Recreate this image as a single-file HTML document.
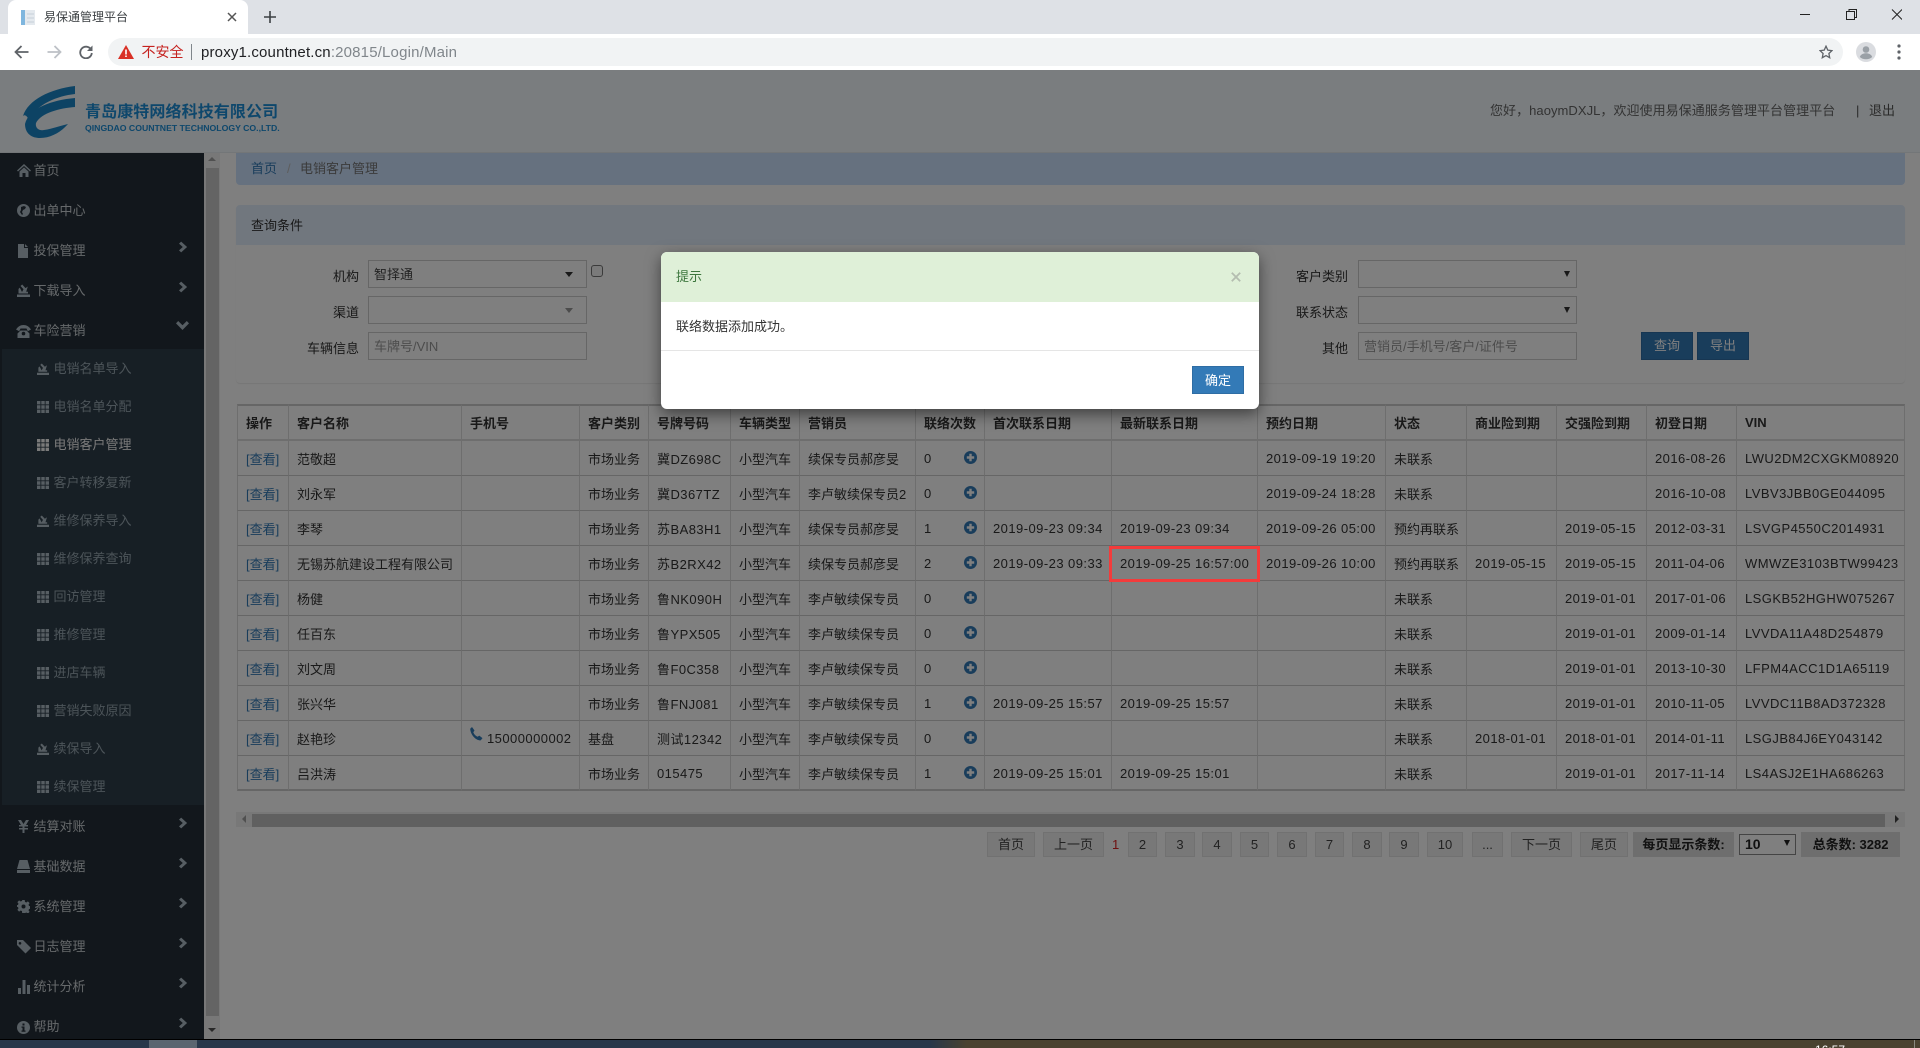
<!DOCTYPE html>
<html lang="zh-CN">
<head>
<meta charset="utf-8">
<title>易保通管理平台</title>
<style>
*{box-sizing:border-box}
html,body{margin:0;padding:0;width:1920px;height:1048px;overflow:hidden;background:#fff;font-family:"Liberation Sans","Noto Sans CJK SC",sans-serif;font-size:13px;color:#333}
.a{position:absolute}
svg{display:block}
/* browser chrome */
#tabs{left:0;top:0;width:1920px;height:34px;background:#dee1e6}
#tab{left:8px;top:0;width:240px;height:35px;background:#fff;border-radius:8px 8px 0 0}
#bar{left:0;top:34px;width:1920px;height:36px;background:#fff}
#omni{left:108px;top:38px;width:1735px;height:28px;border-radius:14px;background:#f1f3f4}
/* page */
#page{left:0;top:70px;width:1920px;height:970px;background:#fff}
#hd{left:0;top:70px;width:1920px;height:83px;background:#f4fafe;border-bottom:1px solid #e6ecf0}
#side{left:0;top:153px;width:204px;height:886px;background:#242f38}
#sub{left:2px;top:349px;width:202px;height:456px;background:#2f3e4a}
.m,.s{position:absolute;white-space:nowrap;line-height:20px;height:20px;font-size:13px;margin-top:1px}
.m{left:33.500px;color:#ccd2d6}
.s{left:53.500px;color:#98a8b2}
.ic{position:absolute;fill:#aebdc7;margin-top:1px}
.sb{position:absolute;left:204px;top:153px;width:16px;height:886px;background:#f1f1f1}
#crumb{left:236px;top:153px;width:1669px;height:32px;background:#ccE2fe;border-radius:0 0 4px 4px}
#qp{left:236px;top:205px;width:1669px;height:178px;background:#fff;border-radius:4px;box-shadow:0 1px 1px rgba(0,0,0,.08)}
#qh{left:0;top:0;width:1669px;height:40px;background:#e3eefc;border-radius:4px 4px 0 0;line-height:42px;padding-left:15px;color:#333}
.lb{position:absolute;text-align:right;width:90px;line-height:20px;height:20px;color:#333;margin-top:1px}
.ip{position:absolute;height:28px;border:1px solid #ccc;background:#fff;line-height:28px;padding-left:5px;color:#444}
.ph{color:#999}
.tri{position:absolute;width:0;height:0;border-left:4px solid transparent;border-right:4px solid transparent;border-top:5px solid #333}
.btn{position:absolute;top:332px;width:52px;height:28px;background:#337ab7;border:1px solid #2e6da4;color:#fff;text-align:center;line-height:26px}
table{position:absolute;left:237px;top:404px;width:1668px;border-collapse:separate;border-spacing:0;table-layout:fixed;color:#333}
th{height:37px;padding:0 0 0 8px;text-align:left;font-weight:700;border-top:2px solid #ccc;border-bottom:2px solid #ddd;border-right:1px solid #ddd;white-space:nowrap;overflow:hidden}
td{height:35px;padding:1px 0 0 8px;border-bottom:1px solid #ccc;border-right:1px solid #ddd;white-space:nowrap;overflow:hidden;position:relative}
th:first-child,td:first-child{border-left:1px solid #ddd}
tr:last-child td{border-bottom:2px solid #ccc}
td.n{letter-spacing:.45px}
td a{color:#337ab7}
.pl{position:absolute;left:48px;top:10px;width:13px;height:13px}
#hs{left:236px;top:812px;width:1669px;height:15px;background:#f1f1f1}
#ht{left:252px;top:814px;width:1633px;height:13px;background:#c1c1c1}
.pg{position:absolute;top:832px;height:25px;background:#f0f0f0;border:1px solid #e2e2e2;text-align:center;line-height:23px;color:#444;white-space:nowrap}
.pb{position:absolute;top:832px;height:25px;background:#ddd;text-align:center;line-height:25px;font-weight:700;color:#222;white-space:nowrap}
#ov{left:0;top:70px;width:1920px;height:969px;background:rgba(0,0,0,.5)}
#modal{left:661px;top:252px;width:598px;height:157px;background:#fff;border-radius:6px;box-shadow:0 5px 15px rgba(0,0,0,.5);overflow:hidden}
#red{left:1109px;top:546px;width:151px;height:36px;border:3px solid #f33b3b}
#task{left:0;top:1039px;width:1920px;height:9px;background:linear-gradient(90deg,#28374a 0,#28374a 930px,#4a4230 967px,#4a4230 100%);border-top:1px solid #000;overflow:hidden}
</style>
</head>
<body>
<svg width="0" height="0" style="position:absolute">
<defs>
<symbol id="grid" viewBox="0 0 12 12"><path d="M0 0h3.400v3.400H0zM4.300 0h3.400v3.400H4.300zM8.600 0H12v3.400H8.600zM0 4.300h3.400v3.400H0zM4.300 4.300h3.400v3.400H4.300zM8.600 4.300H12v3.400H8.600zM0 8.600h3.400V12H0zM4.300 8.600h3.400V12H4.300zM8.600 8.600H12V12H8.600z"/></symbol>
<symbol id="imp" viewBox="0 0 13 13"><path d="M0 10.500h13V13H0zM1.500 9.500h9.500V7.800H9.200l1.600-5.300-2.300 1.600L5.200.5 3.500 2l3 3.300L5 8 2.800 3.600 1.500 5z"/></symbol>
<symbol id="chv" viewBox="0 0 10 12"><path d="M2.400 0 9 6l-6.600 6L0 9.800 4.200 6 0 2.200z"/></symbol>
<symbol id="plus" viewBox="0 0 13 13"><circle cx="6.500" cy="6.500" r="6.500" fill="#337ab7"/><path d="M5.300 2.800h2.400v2.500h2.500v2.400H7.700v2.500H5.300V7.700H2.800V5.300h2.500z" fill="#fff"/></symbol>
</defs>
</svg>

<!-- Browser chrome -->
<div class="a" id="tabs"></div>
<div class="a" id="tab"></div>
<svg class="a" style="left:20px;top:9px" width="16" height="17" viewBox="0 0 16 17"><rect x="1" y="1" width="14" height="15" fill="#e4e9ee"/><rect x="1" y="1" width="4" height="15" fill="#7fb6de"/><path d="M7 5h7M7 9h7M7 13h7" stroke="#c6d0d8"/></svg>
<div class="a" style="left:44px;top:9px;font-size:12px;line-height:17px;color:#3c4043;white-space:nowrap">易保通管理平台</div>
<svg class="a" style="left:227px;top:12px" width="10" height="10" viewBox="0 0 10 10"><path d="M1 1l8 8M9 1L1 9" stroke="#555" stroke-width="1.500"/></svg>
<svg class="a" style="left:264px;top:11px" width="12" height="12" viewBox="0 0 12 12"><path d="M6 0v12M0 6h12" stroke="#3c4043" stroke-width="1.600"/></svg>
<svg class="a" style="left:1800px;top:9px" width="102" height="11" viewBox="0 0 102 11"><path d="M0 5.500h10" stroke="#222"/><path d="M46.500 2.500h8v8h-8zM49 2.500V.5h7.500v8h-2" fill="none" stroke="#222"/><path d="M92 .5l10 10M102 .5l-10 10" stroke="#222"/></svg>

<div class="a" id="bar"></div>
<svg class="a" style="left:14px;top:45px" width="15" height="14" viewBox="0 0 15 14"><path d="M14.500 7H2M7.500 1L1.500 7l6 6" fill="none" stroke="#5f6368" stroke-width="1.800"/></svg>
<svg class="a" style="left:47px;top:45px" width="15" height="14" viewBox="0 0 15 14"><path d="M.5 7H13M7.500 1l6 6-6 6" fill="none" stroke="#bdc1c6" stroke-width="1.800"/></svg>
<svg class="a" style="left:79px;top:45px" width="14" height="14" viewBox="0 0 14 14"><path d="M12 4.500A5.800 5.800 0 1 0 12.800 8" fill="none" stroke="#5f6368" stroke-width="1.800"/><path d="M13.500 .5v5.500H8z" fill="#5f6368"/></svg>
<div class="a" id="omni"></div>
<svg class="a" style="left:118px;top:45px" width="16" height="14" viewBox="0 0 16 14"><path d="M8 0l8 14H0z" fill="#d93025"/><path d="M7.200 4.500h1.600v5H7.200zM7.200 10.500h1.600V12H7.200z" fill="#fff"/></svg>
<div class="a" style="left:141.500px;top:42px;font-size:14px;line-height:20px;color:#c5221f;white-space:nowrap">不安全</div>
<div class="a" style="left:191px;top:44px;width:1px;height:16px;background:#80868b"></div>
<div class="a" style="left:201px;top:43px;font-size:15px;line-height:20px;color:#202124;white-space:nowrap;letter-spacing:.17px">proxy1.countnet.cn<span style="color:#80868b">:20815/Login/Main</span></div>
<svg class="a" style="left:1819px;top:45px" width="14" height="14" viewBox="0 0 14 14"><path d="M7 1.200l1.800 3.900 4.200.5-3.100 2.900.8 4.200L7 10.600l-3.700 2.100.8-4.200L1 5.600l4.200-.5z" fill="none" stroke="#5f6368" stroke-width="1.300"/></svg>
<svg class="a" style="left:1856px;top:42px" width="20" height="20" viewBox="0 0 20 20"><circle cx="10" cy="10" r="10" fill="#dadce0"/><circle cx="10" cy="7.500" r="3.300" fill="#9aa0a6"/><path d="M3.800 15c1-2.700 3.500-3.700 6.200-3.700s5.200 1 6.200 3.700c-1.700 1.600-3.800 2.300-6.200 2.300S5.500 16.600 3.800 15z" fill="#9aa0a6"/></svg>
<svg class="a" style="left:1897px;top:44px" width="4" height="16" viewBox="0 0 4 16"><circle cx="2" cy="2" r="1.600" fill="#5f6368"/><circle cx="2" cy="8" r="1.600" fill="#5f6368"/><circle cx="2" cy="14" r="1.600" fill="#5f6368"/></svg>

<!-- Page -->
<div class="a" id="page"></div>
<div class="a" id="hd"></div>
<svg class="a" style="left:22px;top:86px" width="54" height="53" viewBox="0 0 54 53"><path d="M53 0V8C35 10 15 18 7 34 5 30 3 28 1 30 6 14 28 3 53 0z" fill="#1b87c9"/><path d="M53 12V21C38 22 19 27 14 37c-1 5 3 8 8 7 8-1 15-4 24-6-7 8-17 14-28 14C8 52 3 46 3 38 7 22 30 14 53 12z" fill="#1b87c9"/></svg>
<div class="a" style="left:85px;top:102px;font-size:16px;line-height:22px;font-weight:700;color:#1d8fd8;white-space:nowrap;letter-spacing:.1px">青岛康特网络科技有限公司</div>
<div class="a" style="left:85px;top:122px;font-size:8.700px;line-height:12px;font-weight:700;color:#1d8fd8;white-space:nowrap">QINGDAO COUNTNET TECHNOLOGY CO.,LTD.</div>
<div class="a" style="left:1490px;top:101px;line-height:20px;color:#666;white-space:nowrap;letter-spacing:.05px">您好，haoymDXJL，欢迎使用易保通服务管理平台管理平台</div>
<div class="a" style="left:1856px;top:101px;line-height:20px;color:#555">|</div>
<div class="a" style="left:1869px;top:101px;line-height:20px;color:#555;white-space:nowrap">退出</div>

<!-- Sidebar -->
<div class="a" id="side"></div>
<div class="a" id="sub"></div>
<div class="m" style="top:160px">首页</div>
<svg class="ic" style="left:17px;top:163px" width="14" height="13" viewBox="0 0 14 13"><path d="M7 0l7 6.500-1 1L7 2 1 7.500l-1-1zM2.500 7.500L7 3.400l4.500 4.100V13H8.500V9h-3v4h-3z"/></svg>
<div class="m" style="top:200px">出单中心</div>
<svg class="ic" style="left:17px;top:203px" width="13" height="13" viewBox="0 0 13 13"><path d="M6.500 0a6.500 6.500 0 1 0 0 13 6.500 6.500 0 0 0 0-13zM4 3l3-1 2 1-1 2-2 1-1 2 1 2-1 1-2-3 1-2z" fill-rule="evenodd"/></svg>
<div class="m" style="top:240px">投保管理</div>
<svg class="ic" style="left:18px;top:243px" width="10" height="14" viewBox="0 0 10 14"><path d="M0 0h6v4h4v10H0zM7 0l3 3H7z"/></svg>
<div class="m" style="top:280px">下载导入</div>
<svg class="ic" style="left:17px;top:283px" width="13" height="13"><use href="#imp"/></svg>
<div class="m" style="top:320px">车险营销</div>
<svg class="ic" style="left:16px;top:324px" width="15" height="13" viewBox="0 0 15 13"><path d="M0 4.500C2 1.500 4.500 0 7.500 0s5.500 1.500 7.500 4.500L11.800 6.300 10.500 3.500h-6L3.200 6.300zM4.500 5.500h6l3 3V13h-12V8.500zM7.500 6.800a1.800 1.800 0 1 0 0 3.600 1.800 1.800 0 0 0 0-3.600z" fill-rule="evenodd"/></svg>

<div class="s" style="top:358px">电销名单导入</div><svg class="ic" style="left:37px;top:362px" width="12" height="12"><use href="#imp"/></svg>
<div class="s" style="top:396px">电销名单分配</div><svg class="ic" style="left:37px;top:400px" width="12" height="12"><use href="#grid"/></svg>
<div class="s" style="top:434px;color:#f4f4f4">电销客户管理</div><svg class="ic" style="left:37px;top:438px;fill:#f4f4f4" width="12" height="12"><use href="#grid"/></svg>
<div class="s" style="top:472px">客户转移复新</div><svg class="ic" style="left:37px;top:476px" width="12" height="12"><use href="#grid"/></svg>
<div class="s" style="top:510px">维修保养导入</div><svg class="ic" style="left:37px;top:514px" width="12" height="12"><use href="#imp"/></svg>
<div class="s" style="top:548px">维修保养查询</div><svg class="ic" style="left:37px;top:552px" width="12" height="12"><use href="#grid"/></svg>
<div class="s" style="top:586px">回访管理</div><svg class="ic" style="left:37px;top:590px" width="12" height="12"><use href="#grid"/></svg>
<div class="s" style="top:624px">推修管理</div><svg class="ic" style="left:37px;top:628px" width="12" height="12"><use href="#grid"/></svg>
<div class="s" style="top:662px">进店车辆</div><svg class="ic" style="left:37px;top:666px" width="12" height="12"><use href="#grid"/></svg>
<div class="s" style="top:700px">营销失败原因</div><svg class="ic" style="left:37px;top:704px" width="12" height="12"><use href="#grid"/></svg>
<div class="s" style="top:738px">续保导入</div><svg class="ic" style="left:37px;top:742px" width="12" height="12"><use href="#imp"/></svg>
<div class="s" style="top:776px">续保管理</div><svg class="ic" style="left:37px;top:780px" width="12" height="12"><use href="#grid"/></svg>

<div class="m" style="top:816px">结算对账</div>
<svg class="ic" style="left:18px;top:819px" width="11" height="13" viewBox="0 0 11 13"><path d="M0 0h3l2.500 4L8 0h3L8 5h2v1.500H6.500V8H10v1.500H6.500V13h-2V9.500H1V8h3.500V6.500H1V5h2z"/></svg>
<div class="m" style="top:856px">基础数据</div>
<svg class="ic" style="left:17px;top:859px" width="13" height="13" viewBox="0 0 13 13"><path d="M2.500 0h8L13 9H0zM0 10h13v3H0z"/></svg>
<div class="m" style="top:896px">系统管理</div>
<svg class="ic" style="left:17px;top:899px" width="13" height="13" viewBox="0 0 13 13"><path d="M5.300 0h2.400l.3 1.900 1.300.6 1.600-1.100 1.700 1.700-1.100 1.600.6 1.300 1.900.3v2.400l-1.900.3-.6 1.300 1.100 1.600-1.700 1.700-1.600-1.100-1.300.6-.3 1.900H5.300L5 11.100l-1.300-.6-1.600 1.100L.4 9.900l1.100-1.600-.6-1.300L-1 6.700V5.300l1.900-.3.6-1.300L.4 2.100 2.100.4l1.600 1.100L5 .9zM6.500 4.500a2 2 0 1 0 0 4 2 2 0 0 0 0-4z" fill-rule="evenodd"/></svg>
<div class="m" style="top:936px">日志管理</div>
<svg class="ic" style="left:17px;top:939px" width="16" height="14" viewBox="0 0 16 14"><path d="M0 0h6l8 8-5.500 5.500L0 5zM3 2a1.300 1.300 0 1 0 0 2.600A1.300 1.300 0 0 0 3 2z" fill-rule="evenodd"/></svg>
<div class="m" style="top:976px">统计分析</div>
<svg class="ic" style="left:18px;top:979px" width="12" height="14" viewBox="0 0 12 14"><path d="M0 8h3v6H0zM4.500 0h3v14h-3zM9 5h3v9H9z"/></svg>
<div class="m" style="top:1016px">帮助</div>
<svg class="ic" style="left:17px;top:1020px" width="13" height="13" viewBox="0 0 13 13"><path d="M6.500 0a6.500 6.500 0 1 0 0 13 6.500 6.500 0 0 0 0-13zM5.500 2.500h2v2h-2zM4.500 5.500h3v4h1v1.200h-4V9.500h1V6.700h-1z" fill-rule="evenodd"/></svg>

<svg class="ic" style="left:179px;top:240px" width="9" height="12"><use href="#chv"/></svg>
<svg class="ic" style="left:179px;top:280px" width="9" height="12"><use href="#chv"/></svg>
<svg class="ic" style="left:176px;top:320px" width="13" height="9" viewBox="0 0 13 9"><path d="M0 2.400L2.200 0l4.300 4.200L10.800 0 13 2.400 6.500 9z"/></svg>
<svg class="ic" style="left:179px;top:816px" width="9" height="12"><use href="#chv"/></svg>
<svg class="ic" style="left:179px;top:856px" width="9" height="12"><use href="#chv"/></svg>
<svg class="ic" style="left:179px;top:896px" width="9" height="12"><use href="#chv"/></svg>
<svg class="ic" style="left:179px;top:936px" width="9" height="12"><use href="#chv"/></svg>
<svg class="ic" style="left:179px;top:976px" width="9" height="12"><use href="#chv"/></svg>
<svg class="ic" style="left:179px;top:1016px" width="9" height="12"><use href="#chv"/></svg>

<div class="sb"></div>
<div class="a" style="left:206px;top:168px;width:13px;height:848px;background:#c8c8c8"></div>
<div class="tri" style="left:208px;top:157px;border-top:0;border-bottom:4px solid #a0a0a0"></div>
<div class="tri" style="left:208px;top:1028px;border-top:4px solid #505050"></div>

<!-- Breadcrumb -->
<div class="a" id="crumb"></div>
<div class="a" style="left:251px;top:159px;line-height:20px;color:#337ab7">首页</div>
<div class="a" style="left:287px;top:159px;line-height:20px;color:#bbb">/</div>
<div class="a" style="left:300px;top:159px;line-height:20px;color:#777">电销客户管理</div>

<!-- Query panel -->
<div class="a" id="qp"><div class="a" id="qh">查询条件</div></div>
<div class="lb" style="left:269px;top:266px">机构</div>
<div class="lb" style="left:269px;top:302px">渠道</div>
<div class="lb" style="left:269px;top:338px">车辆信息</div>
<div class="ip" style="left:368px;top:260px;width:219px">智择通</div>
<div class="tri" style="left:565px;top:272px"></div>
<div class="ip" style="left:368px;top:296px;width:219px"></div>
<div class="tri" style="left:565px;top:308px;border-top-color:#999"></div>
<div class="ip ph" style="left:368px;top:332px;width:219px">车牌号/VIN</div>
<div class="a" style="left:591px;top:265px;width:12px;height:12px;background:#f4f4f4;border:1px solid #777;border-radius:3px"></div>

<div class="lb" style="left:1258px;top:266px">客户类别</div>
<div class="lb" style="left:1258px;top:302px">联系状态</div>
<div class="lb" style="left:1258px;top:338px">其他</div>
<div class="ip" style="left:1358px;top:260px;width:219px"></div>
<div class="tri" style="left:1564px;top:271px;border-left-width:3px;border-right-width:3px;border-top-width:6px"></div>
<div class="ip" style="left:1358px;top:296px;width:219px"></div>
<div class="tri" style="left:1564px;top:307px;border-left-width:3px;border-right-width:3px;border-top-width:6px"></div>
<div class="ip ph" style="left:1358px;top:332px;width:219px">营销员/手机号/客户/证件号</div>
<div class="btn" style="left:1641px">查询</div>
<div class="btn" style="left:1697px">导出</div>

<!-- Table -->
<table>
<colgroup><col style="width:52px"><col style="width:173px"><col style="width:118px"><col style="width:69px"><col style="width:82px"><col style="width:69px"><col style="width:116px"><col style="width:69px"><col style="width:127px"><col style="width:146px"><col style="width:128px"><col style="width:81px"><col style="width:90px"><col style="width:90px"><col style="width:90px"><col style="width:168px"></colgroup>
<thead><tr><th>操作</th><th>客户名称</th><th>手机号</th><th>客户类别</th><th>号牌号码</th><th>车辆类型</th><th>营销员</th><th>联络次数</th><th>首次联系日期</th><th>最新联系日期</th><th>预约日期</th><th>状态</th><th>商业险到期</th><th>交强险到期</th><th>初登日期</th><th>VIN</th></tr></thead>
<tbody>
<tr><td><a>[查看]</a></td><td>范敬超</td><td></td><td>市场业务</td><td class="n">冀DZ698C</td><td>小型汽车</td><td>续保专员郝彦旻</td><td class="n">0<svg class="pl"><use href="#plus"/></svg></td><td></td><td></td><td class="n">2019-09-19 19:20</td><td>未联系</td><td></td><td></td><td class="n">2016-08-26</td><td class="n">LWU2DM2CXGKM08920</td></tr>
<tr><td><a>[查看]</a></td><td>刘永军</td><td></td><td>市场业务</td><td class="n">冀D367TZ</td><td>小型汽车</td><td>李卢敏续保专员2</td><td class="n">0<svg class="pl"><use href="#plus"/></svg></td><td></td><td></td><td class="n">2019-09-24 18:28</td><td>未联系</td><td></td><td></td><td class="n">2016-10-08</td><td class="n">LVBV3JBB0GE044095</td></tr>
<tr><td><a>[查看]</a></td><td>李琴</td><td></td><td>市场业务</td><td class="n">苏BA83H1</td><td>小型汽车</td><td>续保专员郝彦旻</td><td class="n">1<svg class="pl"><use href="#plus"/></svg></td><td class="n">2019-09-23 09:34</td><td class="n">2019-09-23 09:34</td><td class="n">2019-09-26 05:00</td><td>预约再联系</td><td></td><td class="n">2019-05-15</td><td class="n">2012-03-31</td><td class="n">LSVGP4550C2014931</td></tr>
<tr><td><a>[查看]</a></td><td>无锡苏航建设工程有限公司</td><td></td><td>市场业务</td><td class="n">苏B2RX42</td><td>小型汽车</td><td>续保专员郝彦旻</td><td class="n">2<svg class="pl"><use href="#plus"/></svg></td><td class="n">2019-09-23 09:33</td><td class="n">2019-09-25 16:57:00</td><td class="n">2019-09-26 10:00</td><td>预约再联系</td><td class="n">2019-05-15</td><td class="n">2019-05-15</td><td class="n">2011-04-06</td><td class="n">WMWZE3103BTW99423</td></tr>
<tr><td><a>[查看]</a></td><td>杨健</td><td></td><td>市场业务</td><td class="n">鲁NK090H</td><td>小型汽车</td><td>李卢敏续保专员</td><td class="n">0<svg class="pl"><use href="#plus"/></svg></td><td></td><td></td><td></td><td>未联系</td><td></td><td class="n">2019-01-01</td><td class="n">2017-01-06</td><td class="n">LSGKB52HGHW075267</td></tr>
<tr><td><a>[查看]</a></td><td>任百东</td><td></td><td>市场业务</td><td class="n">鲁YPX505</td><td>小型汽车</td><td>李卢敏续保专员</td><td class="n">0<svg class="pl"><use href="#plus"/></svg></td><td></td><td></td><td></td><td>未联系</td><td></td><td class="n">2019-01-01</td><td class="n">2009-01-14</td><td class="n">LVVDA11A48D254879</td></tr>
<tr><td><a>[查看]</a></td><td>刘文周</td><td></td><td>市场业务</td><td class="n">鲁F0C358</td><td>小型汽车</td><td>李卢敏续保专员</td><td class="n">0<svg class="pl"><use href="#plus"/></svg></td><td></td><td></td><td></td><td>未联系</td><td></td><td class="n">2019-01-01</td><td class="n">2013-10-30</td><td class="n">LFPM4ACC1D1A65119</td></tr>
<tr><td><a>[查看]</a></td><td>张兴华</td><td></td><td>市场业务</td><td class="n">鲁FNJ081</td><td>小型汽车</td><td>李卢敏续保专员</td><td class="n">1<svg class="pl"><use href="#plus"/></svg></td><td class="n">2019-09-25 15:57</td><td class="n">2019-09-25 15:57</td><td></td><td>未联系</td><td></td><td class="n">2019-01-01</td><td class="n">2010-11-05</td><td class="n">LVVDC11B8AD372328</td></tr>
<tr><td><a>[查看]</a></td><td>赵艳珍</td><td class="n"><svg style="position:absolute;left:8px;top:6px" width="13" height="14" viewBox="0 0 13 14"><path d="M2 0l2.500 3.500-1.200 1.800c.8 2.200 2.300 3.700 4.300 4.500l1.700-1.200 3.200 2.500-1.800 2.300C5.500 13.500.5 7.500.2 1.700z" fill="#337ab7"/></svg><span style="margin-left:17px">15000000002</span></td><td>基盘</td><td class="n">测试12342</td><td>小型汽车</td><td>李卢敏续保专员</td><td class="n">0<svg class="pl"><use href="#plus"/></svg></td><td></td><td></td><td></td><td>未联系</td><td class="n">2018-01-01</td><td class="n">2018-01-01</td><td class="n">2014-01-11</td><td class="n">LSGJB84J6EY043142</td></tr>
<tr><td><a>[查看]</a></td><td>吕洪涛</td><td></td><td>市场业务</td><td class="n">015475</td><td>小型汽车</td><td>李卢敏续保专员</td><td class="n">1<svg class="pl"><use href="#plus"/></svg></td><td class="n">2019-09-25 15:01</td><td class="n">2019-09-25 15:01</td><td></td><td>未联系</td><td></td><td class="n">2019-01-01</td><td class="n">2017-11-14</td><td class="n">LS4ASJ2E1HA686263</td></tr>
</tbody>
</table>

<!-- Horizontal scrollbar -->
<div class="a" id="hs"></div>
<div class="a" id="ht"></div>
<div class="tri" style="left:242px;top:815px;border-top:4px solid transparent;border-bottom:4px solid transparent;border-left:0;border-right:4px solid #a0a0a0"></div>
<div class="tri" style="left:1895px;top:815px;border-top:4px solid transparent;border-bottom:4px solid transparent;border-right:0;border-left:4px solid #444"></div>

<!-- Pagination -->
<div class="pg" style="left:987px;width:48px">首页</div>
<div class="pg" style="left:1043px;width:61px">上一页</div>
<div class="a" style="left:1112px;top:835px;line-height:20px;color:#d22">1</div>
<div class="pg" style="left:1128px;width:29px">2</div>
<div class="pg" style="left:1165px;width:30px">3</div>
<div class="pg" style="left:1202px;width:30px">4</div>
<div class="pg" style="left:1240px;width:29px">5</div>
<div class="pg" style="left:1277px;width:30px">6</div>
<div class="pg" style="left:1315px;width:29px">7</div>
<div class="pg" style="left:1352px;width:30px">8</div>
<div class="pg" style="left:1389px;width:30px">9</div>
<div class="pg" style="left:1427px;width:36px">10</div>
<div class="pg" style="left:1472px;width:31px">...</div>
<div class="pg" style="left:1511px;width:61px">下一页</div>
<div class="pg" style="left:1580px;width:48px">尾页</div>
<div class="pb" style="left:1633px;width:101px">每页显示条数:</div>
<div class="a" style="left:1739px;top:834px;width:57px;height:21px;background:#fff;border:1px solid #888;line-height:19px;padding-left:5px;font-weight:700;font-size:14px;color:#222">10</div>
<div class="tri" style="left:1784px;top:840px;border-left-width:3px;border-right-width:3px;border-top-width:6px;border-top-color:#222"></div>
<div class="pb" style="left:1801px;width:99px">总条数: 3282</div>

<!-- Backdrop + modal -->
<div class="a" id="ov"></div>
<div class="a" id="red"></div>
<div class="a" id="modal">
  <div class="a" style="left:0;top:0;width:598px;height:50px;background:#dff0d8"></div>
  <div class="a" style="left:15px;top:15px;line-height:20px;color:#3c763d">提示</div>
  <svg class="a" style="left:570px;top:20px" width="10" height="10" viewBox="0 0 10 10"><path d="M.8.8l8.400 8.400M9.200.8L.8 9.200" stroke="#b4bdb0" stroke-width="1.800"/></svg>
  <div class="a" style="left:15px;top:65px;line-height:20px;color:#333;white-space:nowrap">联络数据添加成功。</div>
  <div class="a" style="left:0;top:98px;width:598px;height:1px;background:#e5e5e5"></div>
  <div class="a" style="left:531px;top:114px;width:52px;height:28px;background:#337ab7;border:1px solid #2e6da4;color:#fff;text-align:center;line-height:28px">确定</div>
</div>

<!-- Taskbar sliver -->
<div class="a" id="task">
  <div class="a" style="left:149px;top:0;width:48px;height:9px;background:#5b6570"></div>
  <div class="a" style="left:1815px;top:3px;font-size:12px;line-height:14px;color:#fff;white-space:nowrap">16:57</div>
  <div class="a" style="left:1914px;top:0;width:1px;height:9px;background:#8a8a80"></div>
</div>
</body>
</html>
